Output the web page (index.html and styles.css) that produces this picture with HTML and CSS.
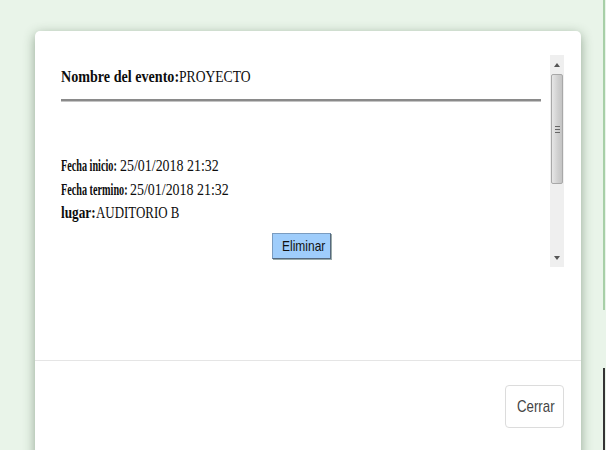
FILE: index.html
```html
<!DOCTYPE html>
<html lang="es">
<head>
<meta charset="utf-8">
<title>Evento</title>
<link rel="stylesheet" href="styles.css">
</head>
<body>
<div class="page">
  <div class="modal">
    <div class="modal-body">
      <div class="frame">
        <div class="frame-content">
          <div class="line title">
            <span class="seg k0"><span class="sq s83"><b>Nombre del evento:</b></span></span><span class="seg"><span class="sq s80">PROYECTO</span></span>
          </div>
          <div class="rule"></div>
          <div class="details">
            <div class="line">
              <span class="seg k1"><span class="sq s60"><b>Fecha inicio:</b></span></span><span class="seg"><span class="sq s82">25/01/2018 21:32</span></span>
            </div>
            <div class="line">
              <span class="seg k2"><span class="sq s60"><b>Fecha termino:</b></span></span><span class="seg"><span class="sq s82">25/01/2018 21:32</span></span>
            </div>
            <div class="line">
              <span class="seg k3"><span class="sq s78"><b>lugar:</b></span></span><span class="seg"><span class="sq s76">AUDITORIO B</span></span>
            </div>
          </div>
          <div class="actions"><button class="btn-del"><span class="sq s80">Eliminar</span></button></div>
        </div>
        <div class="scrollbar">
          <div class="sb-btn"><span class="arrow up"></span></div>
          <div class="sb-thumb"><span class="grip"></span></div>
          <div class="sb-track"></div>
          <div class="sb-btn"><span class="arrow down"></span></div>
        </div>
      </div>
    </div>
    <div class="modal-footer">
      <button class="btn-close"><span class="sq s78">Cerrar</span></button>
    </div>
  </div>
  <div class="edge"><div class="edge-top"></div><div class="edge-gap"></div><div class="edge-bot"></div></div>
</div>
</body>
</html>
```
FILE: styles.css
```css
html, body { margin: 0; padding: 0; }
body {
  background: #e9f4e9;
  width: 606px;
  height: 450px;
  overflow: hidden;
  font-family: "Liberation Serif", serif;
}
.page {
  display: flex;
  padding: 31px 0 0 35px;
  height: 450px;
  box-sizing: border-box;
}
.modal {
  width: 546px;
  height: 460px;
  flex: none;
  background: #fff;
  border-radius: 5px;
  box-shadow: 0 3px 12px rgba(40, 70, 40, 0.45);
}
.modal-body {
  padding: 24px 17px 0 18px;
  height: 330px;
  box-sizing: border-box;
  border-bottom: 1px solid #e5e5e5;
}
.frame {
  display: flex;
  height: 212px;
}
.frame-content {
  flex: 1;
  padding: 10px 0 0 8px;
  min-width: 0;
}
.sq {
  display: inline-block;
  transform-origin: 0 50%;
  white-space: nowrap;
}
.s60 { transform: scaleX(0.6); }
.s76 { transform: scaleX(0.76); }
.s78 { transform: scaleX(0.78); }
.s80 { transform: scaleX(0.8); }
.s82 { transform: scaleX(0.82); }
.s83 { transform: scaleX(0.83); }
.line {
  display: flex;
  font-size: 17px;
  line-height: 23.5px;
  color: #0d0d0d;
}
.seg { flex: none; white-space: nowrap; }
.k0 { width: 118px; }
.k1 { width: 59px; }
.k2 { width: 69px; }
.k3 { width: 35px; }
.title { line-height: 24px; }
.rule {
  margin: 10px 9px 0 0;
  border-top: 2px solid #8a8a8a;
  border-bottom: 1px solid #c4c4c4;
}
.details { margin-top: 52px; }
.actions {
  display: flex;
  padding-left: 211px;
  margin-top: 8px;
}
.btn-del {
  width: 59px;
  height: 26px;
  padding: 0 0 0 9px;
  text-align: left;
  background: #9fcdfb;
  border: 1px solid #7a9cc0;
  border-right-color: #56697e;
  border-bottom-color: #56697e;
  box-shadow: 1px 1px 0 #9aa;
  font-family: "Liberation Sans", sans-serif;
  font-size: 15px;
  color: #111;
}
.scrollbar {
  width: 14px;
  flex: none;
  display: flex;
  flex-direction: column;
  background: #efefef;
}
.sb-btn {
  height: 19px;
  display: flex;
  align-items: center;
  justify-content: center;
}
.arrow {
  width: 0; height: 0;
  border-left: 3px solid transparent;
  border-right: 3px solid transparent;
}
.arrow.up { border-bottom: 4px solid #555; }
.arrow.down { border-top: 4px solid #555; }
.sb-thumb {
  height: 108px;
  margin: 0 1px;
  border: 1px solid #a8a8a8;
  border-radius: 2px;
  background: linear-gradient(to right, #e6e6e6, #cfcfcf 60%, #c4c4c4);
  display: flex;
  align-items: center;
  justify-content: center;
}
.grip {
  width: 5px;
  height: 7px;
  background: repeating-linear-gradient(to bottom, #666 0 1px, transparent 1px 3px);
}
.sb-track { flex: 1; }
.modal-footer {
  display: flex;
  justify-content: flex-end;
  padding: 24px 17px;
}
.btn-close {
  width: 59px;
  height: 43px;
  background: #fff;
  border: 1px solid #dcdcdc;
  border-radius: 4px;
  font-family: "Liberation Sans", sans-serif;
  font-size: 17px;
  color: #444;
  padding: 0 0 0 11px;
  text-align: left;
}
.edge {
  margin-left: 22px;
  margin-top: -31px;
  width: 2px;
  display: flex;
  flex-direction: column;
}
.edge-top { height: 310px; background: #a7cfa7; }
.edge-gap { height: 58px; }
.edge-bot { flex: 1; background: #333; }
```
